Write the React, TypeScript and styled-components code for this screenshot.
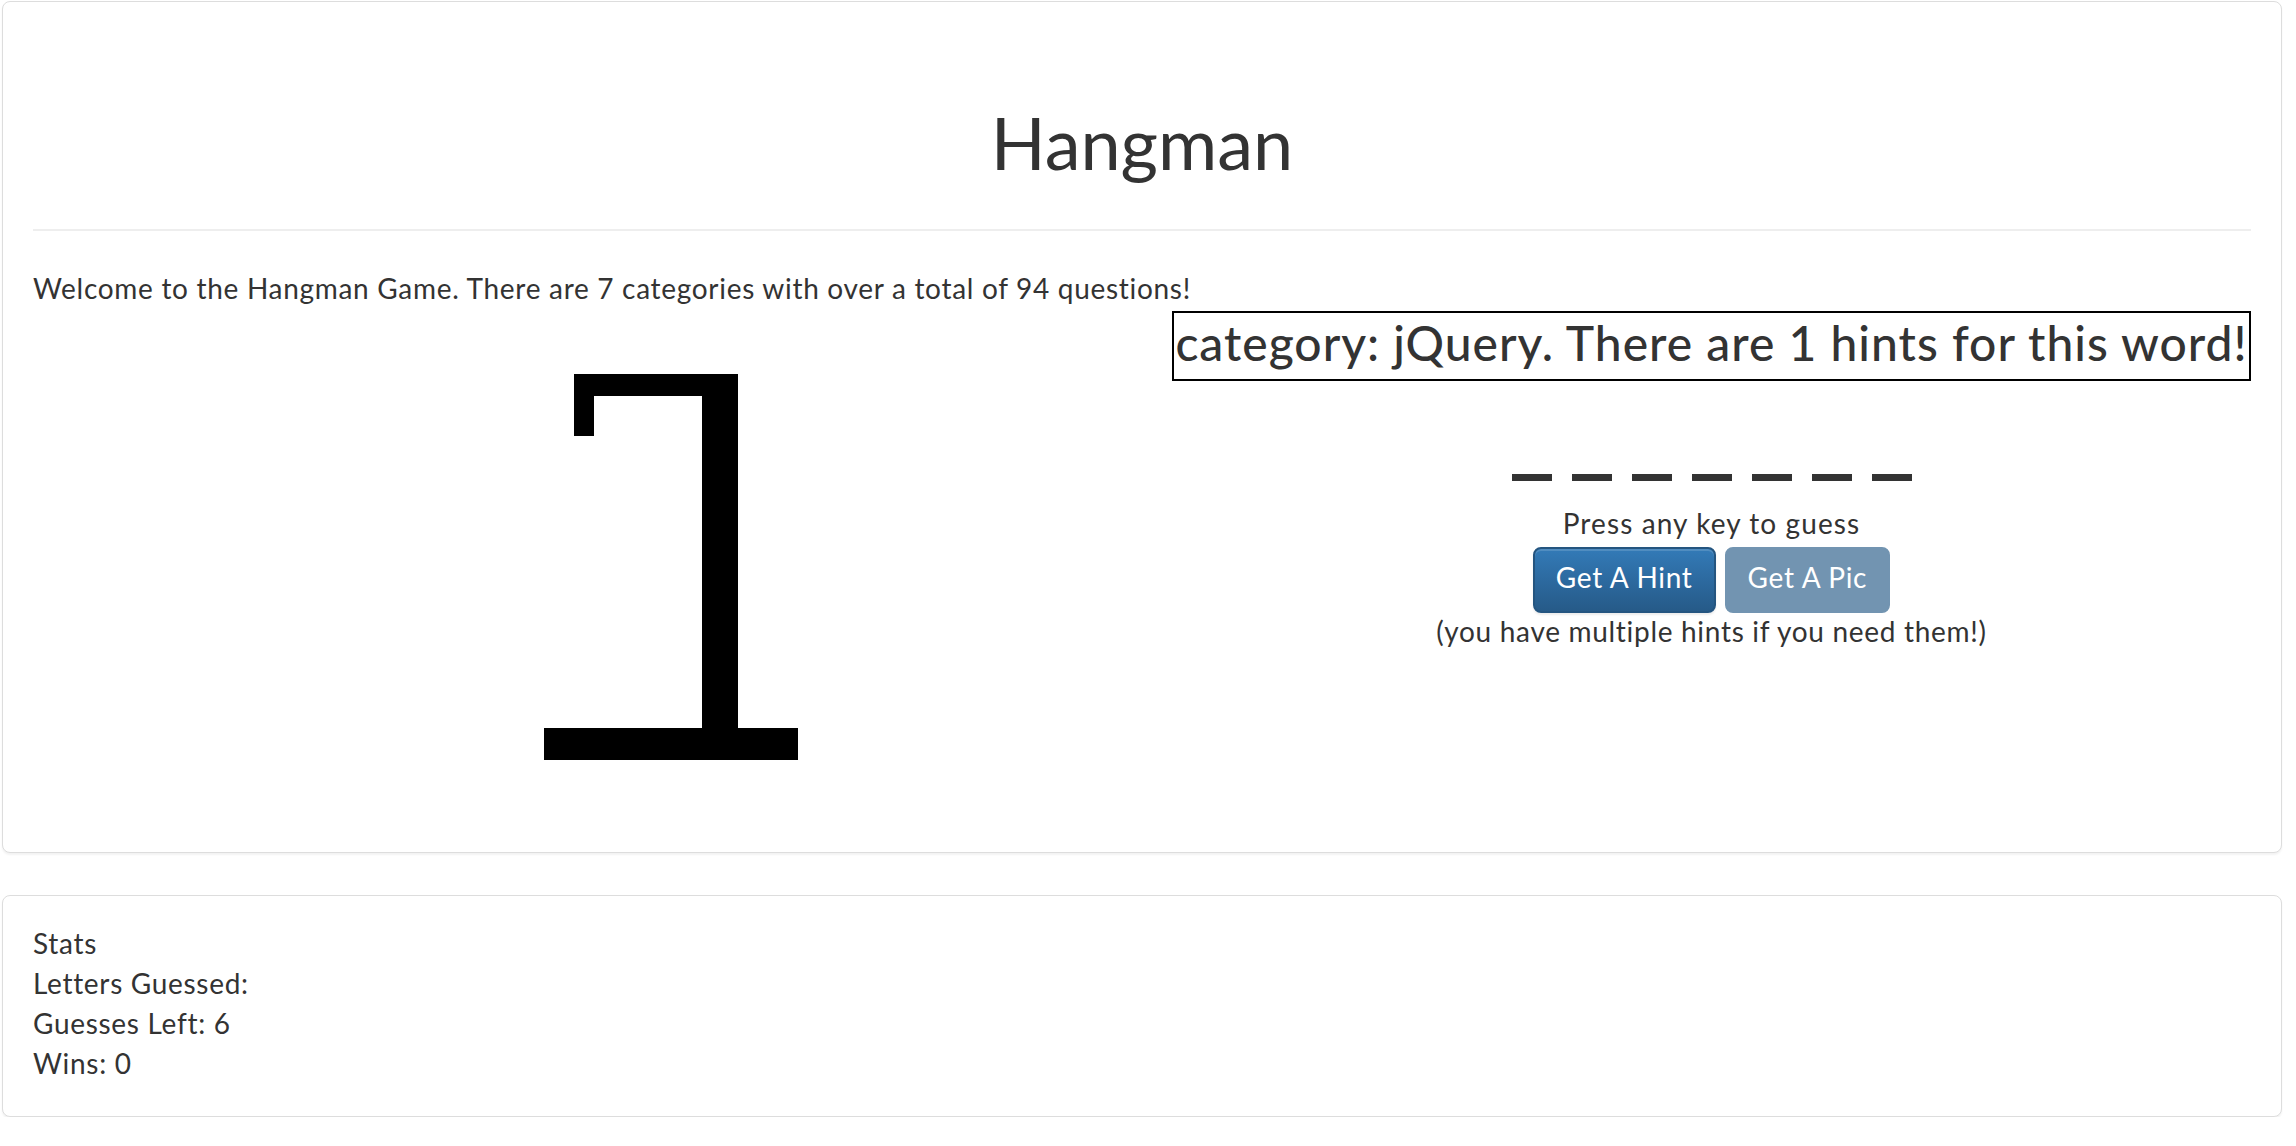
import React from "react";
import styled, { createGlobalStyle } from "styled-components";

const GlobalStyle = createGlobalStyle`
  html, body {
    margin: 0;
    padding: 0;
    background: #ffffff;
  }
  body {
    font-family: Lato, "Noto Sans", "Liberation Sans", sans-serif;
    font-size: 28px;
    line-height: 40px;
    letter-spacing: 0.7px;
    color: #333333;
  }
  * { box-sizing: border-box; }
`;

const Page = styled.div`
  padding: 1px 14px 0 2px;
`;

const Panel = styled.section<{ $gapAfter?: number; $shiftUp?: number }>`
  border: 1px solid #dddddd;
  border-radius: 8px;
  background: #ffffff;
  box-shadow: 0 2px 2px rgba(0, 0, 0, 0.05);
  padding: ${(p) => 30 - (p.$shiftUp ?? 0)}px 30px
    ${(p) => 30 + (p.$shiftUp ?? 0)}px;
  margin-bottom: ${(p) => p.$gapAfter ?? 0}px;
`;

const Title = styled.h1`
  margin: 71px 0 47px;
  font-size: 72px;
  line-height: 79px;
  font-weight: 400;
  letter-spacing: 0;
  text-align: center;
  color: #333333;
`;

const Rule = styled.hr`
  margin: 0 0 37px;
  border: 0;
  border-top: 2px solid #eeeeee;
`;

const Welcome = styled.p`
  margin: 0 0 3px;
`;

const Row = styled.div`
  display: flex;
  margin: 0 -30px;
`;

const Column = styled.div<{ $center?: boolean }>`
  flex: 0 0 50%;
  padding: 0 30px;
  display: flex;
  flex-direction: column;
  align-items: ${(p) => (p.$center ? "center" : "flex-start")};
  text-align: ${(p) => (p.$center ? "center" : "left")};
`;

const Gallows = styled.svg`
  display: block;
  margin-left: 511px;
`;

const CategoryBox = styled.h3`
  align-self: stretch;
  margin: 0;
  border: 2px solid #000000;
  padding: 6px 0 12px;
  font-size: 48px;
  line-height: 48px;
  font-weight: 500;
  letter-spacing: 1px;
  white-space: nowrap;
  text-align: center;
  color: #333333;
`;

const Blanks = styled.div`
  display: flex;
  gap: 20px;
  margin-top: 93px;
`;

const Blank = styled.span`
  display: block;
  width: 40px;
  height: 7px;
  background: #333333;
`;

const Prompt = styled.div<{ $top: number; $spacing?: number }>`
  margin-top: ${(p) => p.$top}px;
  line-height: 40px;
  letter-spacing: ${(p) => p.$spacing ?? 0.7}px;
`;

const Buttons = styled.div`
  display: flex;
  gap: 9px;
  margin-top: 4px;
`;

const Button = styled.button<{ $muted?: boolean }>`
  font-family: inherit;
  font-size: 28px;
  line-height: 40px;
  letter-spacing: 0.7px;
  height: 66px;
  padding: 8px 21px 14px;
  border-radius: 8px;
  color: #ffffff;
  cursor: pointer;
  border: 2px solid ${(p) => (p.$muted ? "#7294b1" : "#245580")};
  background: ${(p) =>
    p.$muted
      ? "#7294b1"
      : "linear-gradient(to bottom, #337ab7 0%, #265a88 100%)"};
  box-shadow: ${(p) =>
    p.$muted
      ? "none"
      : "inset 0 2px 0 rgba(255,255,255,0.15), 0 2px 2px rgba(0,0,0,0.075)"};
`;

const StatLine = styled.div`
  line-height: 40px;
`;

export default function App() {
  const word = Array.from({ length: 7 });
  return (
    <>
      <GlobalStyle />
      <Page>
        <Panel $gapAfter={42}>
          <Title>Hangman</Title>
          <Rule />
          <Welcome>
            Welcome to the Hangman Game. There are 7 categories with over a total of 94 questions!
          </Welcome>
          <Row>
            <Column>
              <Gallows width="254" height="511" viewBox="0 0 254 511">
                <rect x="0" y="417" width="254" height="32" fill="#000" />
                <rect x="158" y="63" width="36" height="356" fill="#000" />
                <rect x="30" y="63" width="164" height="22" fill="#000" />
                <rect x="30" y="63" width="20" height="62" fill="#000" />
              </Gallows>
            </Column>
            <Column $center>
              <CategoryBox>category: jQuery. There are 1 hints for this word!</CategoryBox>
              <Blanks>
                {word.map((_, i) => (
                  <Blank key={i} />
                ))}
              </Blanks>
              <Prompt $top={22} $spacing={1.1}>Press any key to guess</Prompt>
              <Buttons>
                <Button>Get A Hint</Button>
                <Button $muted>Get A Pic</Button>
              </Buttons>
              <Prompt $top={-2}>(you have multiple hints if you need them!)</Prompt>
            </Column>
          </Row>
        </Panel>
        <Panel $shiftUp={3}>
          <StatLine>Stats</StatLine>
          <StatLine>Letters Guessed:</StatLine>
          <StatLine>Guesses Left: 6</StatLine>
          <StatLine>Wins: 0</StatLine>
        </Panel>
      </Page>
    </>
  );
}
